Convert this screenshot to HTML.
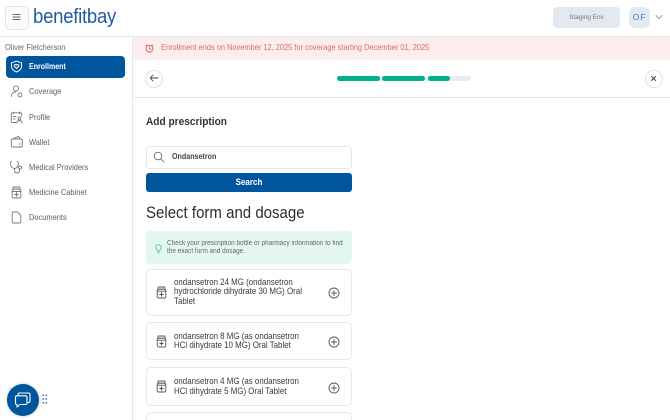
<!DOCTYPE html>
<html><head><meta charset="utf-8">
<style>
html,body{margin:0;padding:0;background:#fff;overflow:hidden}
#r{position:relative;width:670px;height:420px;overflow:hidden;background:#fff;font-family:"Liberation Sans",sans-serif;color:#333}
#r div,#r svg{position:absolute}
.t{white-space:nowrap;transform-origin:0 50%}
.nav{left:29px;font-size:8.2px;color:#5c5c5c;line-height:12px;white-space:nowrap;transform:scaleX(.91);transform-origin:0 50%}
.card{left:146px;width:204px;background:#fff;border:1px solid #e8e8e8;border-radius:5px;box-sizing:content-box}
.ct{left:174px;font-size:9.1px;line-height:9.6px;color:#3a3a3a;white-space:nowrap;transform:scaleX(.87);transform-origin:0 50%}
svg{fill:none;stroke-linecap:round;stroke-linejoin:round}
</style></head><body>
<div id="r">
<div style="left:0;top:36px;width:670px;height:1px;background:#e9e9e9"></div>
<div style="left:132px;top:37px;width:1px;height:383px;background:#e6e6e6"></div>
<div style="left:5px;top:6px;width:22px;height:22px;border:1px solid #e4e4e4;border-radius:5px;background:#fbfbfb"></div>
<svg style="left:12px;top:13px" width="9" height="8" stroke="#666" stroke-width="1"><path d="M1 1.5H8M1 4H8M1 6.5H8"/></svg>
<div class="t" style="left:32.5px;top:3.5px;font-size:20px;line-height:26px;color:#1f5c9e;letter-spacing:-.3px;transform:scaleX(.93)">benefitbay</div>
<div class="t" style="left:113px;top:9px;font-size:3px;line-height:4px;color:#7a9cc4">™</div>
<div style="left:553px;top:7px;width:67px;height:21px;background:#e3e9f0;border-radius:4px"></div>
<div class="t" style="left:553px;top:7px;width:67px;font-size:6.8px;line-height:21px;text-align:center;color:#777;transform:scaleX(.94);transform-origin:50% 50%">Staging Env</div>
<div style="left:629px;top:7px;width:21px;height:21px;background:#e3e9f0;border-radius:6px;font-size:8.5px;line-height:21px;text-align:center;color:#4f79b5;letter-spacing:1px">OF</div>
<svg style="left:655px;top:14px" width="8" height="6" stroke="#999" stroke-width="1"><path d="M1 1.5L4 4.5L7 1.5"/></svg>

<div class="t" style="left:5px;top:41.5px;font-size:8.2px;line-height:12px;color:#666;transform:scaleX(.91)">Oliver Fletcherson</div>
<div style="left:6px;top:56px;width:119px;height:22px;background:#00569c;border-radius:4px"></div>
<svg style="left:10px;top:60px" width="13" height="13" stroke="#fff" stroke-width="1"><path d="M6.5 1.2L11.5 2.8V6.3C11.5 9.2 9.2 11 6.5 12C3.8 11 1.5 9.2 1.5 6.3V2.8Z"/><path d="M6.5 8.5L4.4 6.4C3.5 5 5.4 3.8 6.5 5.2C7.6 3.8 9.5 5 8.6 6.4Z"/></svg>
<div class="nav" style="top:60.5px;color:#fff;font-weight:bold;font-size:8px;transform:scaleX(.88)">Enrollment</div>

<svg style="left:10px;top:85px" width="14" height="13" stroke="#777" stroke-width=".9"><circle cx="6" cy="3.5" r="2.5"/><path d="M1.5 11.5C1.5 8.5 3.5 7 6 7"/><circle cx="10" cy="10" r="2"/></svg>
<div class="nav" style="top:85.5px">Coverage</div>
<svg style="left:10px;top:111px" width="14" height="13" stroke="#777" stroke-width=".9"><path d="M6 11.5H2.5C1.8 11.5 1.3 11 1.3 10.3V3C1.3 2.3 1.8 1.8 2.5 1.8H10.5C11.2 1.8 11.7 2.3 11.7 3V5"/><path d="M3.5 1V2.8M9.5 1V2.8M3.5 5.5H6M3.5 8H5"/><circle cx="9.5" cy="7.5" r="1.4"/><path d="M7 12C7 10.3 8 9.5 9.5 9.5S12 10.3 12 12"/></svg>
<div class="nav" style="top:111.5px">Profile</div>
<svg style="left:10px;top:135px" width="14" height="13" stroke="#777" stroke-width=".9"><rect x="1.3" y="4" width="11" height="8" rx="1.5"/><path d="M3 4L8.5 1.3L10 4"/><path d="M9.5 9H10.5"/></svg>
<div class="nav" style="top:136.5px">Wallet</div>
<svg style="left:9px;top:160px" width="15" height="14" stroke="#777" stroke-width=".9"><path d="M2.5 1.5C1.5 1.8 1.2 2.5 1.4 4C1.7 6.5 3.5 8.5 5.5 8.5S9 6.5 9.3 4C9.5 2.5 9.2 1.8 8.2 1.5"/><path d="M5.5 8.5V10.5C5.5 12 6.5 13 8 13S10.5 12 10.5 10.5V9"/><circle cx="11" cy="7.5" r="1.5"/></svg>
<div class="nav" style="top:161.5px">Medical Providers</div>
<svg style="left:11px;top:186px" width="11" height="13" stroke="#777" stroke-width=".9"><rect x="2" y="1" width="7" height="2.2" rx=".6"/><rect x="1.2" y="3.2" width="8.6" height="8.8" rx="1.4"/><path d="M1.2 5.5H9.8"/><path d="M3.8 8.5H7.2M5.5 6.8V10.2" stroke-width="1.1"/></svg>
<div class="nav" style="top:186.5px">Medicine Cabinet</div>
<svg style="left:11px;top:211px" width="11" height="13" stroke="#777" stroke-width=".9"><path d="M1.2 2.2C1.2 1.5 1.7 1 2.4 1H6.5L9.8 4.3V10.8C9.8 11.5 9.3 12 8.6 12H2.4C1.7 12 1.2 11.5 1.2 10.8Z"/></svg>
<div class="nav" style="top:211.5px">Documents</div>

<div style="left:7px;top:384px;width:32px;height:32px;border-radius:50%;background:#00569c;box-shadow:0 0 3px rgba(0,0,0,.25)"></div>
<svg style="left:14px;top:391px" width="18" height="18" stroke="#fff" stroke-width="1.1"><path d="M4 4.5V3.5C4 2.5 4.6 2 5.5 2H14.5C15.5 2 16 2.6 16 3.5V10C16 11 15.4 11.5 14.5 11.5H14"/><path d="M3 4.8H11.5C12.5 4.8 13 5.4 13 6.3V12C13 13 12.4 13.5 11.5 13.5H6L3 16V13.5C2 13.5 1.5 13 1.5 12V6.3C1.5 5.4 2 4.8 3 4.8Z"/></svg>
<svg style="left:42px;top:394px" width="6" height="12" fill="#4f79b5" stroke="none"><g fill="#4f79b5"><rect x=".5" y=".5" width="1.6" height="1.6"/><rect x="3.5" y=".5" width="1.6" height="1.6"/><rect x=".5" y="4.2" width="1.6" height="1.6"/><rect x="3.5" y="4.2" width="1.6" height="1.6"/><rect x=".5" y="8" width="1.6" height="1.6"/><rect x="3.5" y="8" width="1.6" height="1.6"/></g></svg>

<div style="left:133px;top:37px;width:537px;height:23px;background:#fbeeee"></div>
<svg style="left:145px;top:43.5px" width="9" height="9" stroke="#e2686c" stroke-width="1"><circle cx="4.5" cy="4.7" r="3.4"/><path d="M4.5 3V4.8L5.7 5.5M1 1.7L2 .9M8 1.7L7 .9"/></svg>
<div class="t" style="left:160.5px;top:41.5px;font-size:8.2px;line-height:12px;color:#e0696d;transform:scaleX(.907)">Enrollment ends on November 12, 2025 for coverage starting December 01, 2025</div>

<div style="left:133px;top:97px;width:537px;height:1px;background:#e9e9e9"></div>
<div style="left:145px;top:70px;width:16px;height:16px;border:1px solid #e2e2e2;border-radius:50%"></div>
<svg style="left:149px;top:74px" width="10" height="8" stroke="#444" stroke-width=".9"><path d="M9 4H1.2M4 1L1.2 4L4 7"/></svg>
<div style="left:337px;top:76px;width:134px;height:5px;background:#e6ecf1;border-radius:3px"></div>
<div style="left:337px;top:76px;width:43px;height:5px;background:#00b08c;border-radius:3px"></div>
<div style="left:382px;top:76px;width:43px;height:5px;background:#00b08c;border-radius:3px"></div>
<div style="left:428px;top:76px;width:22px;height:5px;background:#00b08c;border-radius:3px"></div>
<div style="left:645px;top:70px;width:16px;height:16px;border:1px solid #e2e2e2;border-radius:50%"></div>
<svg style="left:650px;top:75px" width="7" height="7" stroke="#444" stroke-width="1"><path d="M1.5 1.5L5.5 5.5M5.5 1.5L1.5 5.5"/></svg>

<div class="t" style="left:146px;top:114px;font-size:11px;line-height:16px;font-weight:bold;color:#333;transform:scaleX(.92)">Add prescription</div>
<div style="left:146px;top:146px;width:204px;height:21px;border:1px solid #e6e6e6;border-radius:4px"></div>
<svg style="left:153px;top:151px" width="12" height="12" stroke="#777" stroke-width="1"><circle cx="5" cy="5" r="3.8"/><path d="M7.8 7.8L11 11"/></svg>
<div class="t" style="left:171.5px;top:150.5px;font-size:8px;line-height:12px;font-weight:bold;color:#444;transform:scaleX(.89)">Ondansetron</div>
<div style="left:146px;top:172.5px;width:206px;height:19px;background:#00569c;border-radius:3px"></div>
<div class="t" style="left:146px;top:172.5px;width:206px;font-size:9px;line-height:18.5px;font-weight:bold;color:#fff;text-align:center;transform:scaleX(.89);transform-origin:50% 50%">Search</div>
<div class="t" style="left:146px;top:202px;font-size:16.5px;line-height:22px;color:#2e2e2e;transform:scaleX(.91)">Select form and dosage</div>

<div style="left:146px;top:231px;width:206px;height:33px;background:#e4f6f2;border-radius:4px"></div>
<svg style="left:155px;top:244px" width="7" height="10" stroke="#4fc3a9" stroke-width=".9"><path d="M2.2 6.2C1 5.2.8 4.3.8 3.5C.8 2 2 .8 3.5.8S6.2 2 6.2 3.5C6.2 4.3 6 5.2 4.8 6.2V7H2.2ZM2.5 8.8H4.5"/></svg>
<div class="t" style="left:167px;top:239.5px;font-size:7px;line-height:8.8px;color:#5e6b68;transform:scaleX(.92)">Check your prescription bottle or pharmacy information to find<br>the exact form and dosage.</div>

<div class="card" style="top:269px;height:45px"></div>
<div class="ct" style="top:277.5px">ondansetron 24 MG (ondansetron<br>hydrochloride dihydrate 30 MG) Oral<br>Tablet</div>
<div class="card" style="top:322px;height:36px"></div>
<div class="ct" style="top:331.5px">ondansetron 8 MG (as ondansetron<br>HCl dihydrate 10 MG) Oral Tablet</div>
<div class="card" style="top:367px;height:37px"></div>
<div class="ct" style="top:377px">ondansetron 4 MG (as ondansetron<br>HCl dihydrate 5 MG) Oral Tablet</div>
<div class="card" style="top:412px;height:8px;border-bottom:0;border-radius:5px 5px 0 0"></div>

<svg style="left:156px;top:286px" width="11" height="13" stroke="#555" stroke-width=".9"><rect x="2" y="1" width="7" height="2.2" rx=".6"/><rect x="1.2" y="3.2" width="8.6" height="8.8" rx="1.4"/><path d="M1.2 5.2H9.8"/><path d="M3.8 8.5H7.2M5.5 6.8V10.2" stroke-width="1.1"/></svg>
<svg style="left:156px;top:335px" width="11" height="13" stroke="#555" stroke-width=".9"><rect x="2" y="1" width="7" height="2.2" rx=".6"/><rect x="1.2" y="3.2" width="8.6" height="8.8" rx="1.4"/><path d="M1.2 5.2H9.8"/><path d="M3.8 8.5H7.2M5.5 6.8V10.2" stroke-width="1.1"/></svg>
<svg style="left:156px;top:380px" width="11" height="13" stroke="#555" stroke-width=".9"><rect x="2" y="1" width="7" height="2.2" rx=".6"/><rect x="1.2" y="3.2" width="8.6" height="8.8" rx="1.4"/><path d="M1.2 5.2H9.8"/><path d="M3.8 8.5H7.2M5.5 6.8V10.2" stroke-width="1.1"/></svg>

<svg style="left:328px;top:287px" width="12" height="12" stroke="#555" stroke-width=".9"><circle cx="6" cy="6" r="5"/><path d="M3.5 6H8.5M6 3.5V8.5"/></svg>
<svg style="left:328px;top:336px" width="12" height="12" stroke="#555" stroke-width=".9"><circle cx="6" cy="6" r="5"/><path d="M3.5 6H8.5M6 3.5V8.5"/></svg>
<svg style="left:328px;top:381.5px" width="12" height="12" stroke="#555" stroke-width=".9"><circle cx="6" cy="6" r="5"/><path d="M3.5 6H8.5M6 3.5V8.5"/></svg>
</div>
</body></html>
